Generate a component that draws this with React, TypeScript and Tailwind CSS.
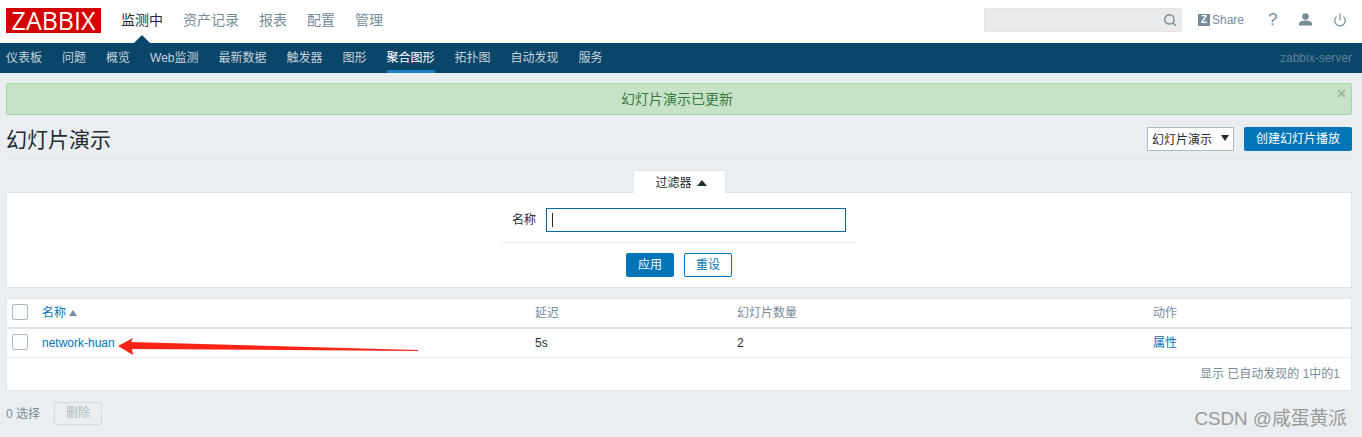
import { Search, Power, X } from "lucide-react";

const FONT = "font-['Liberation_Sans','Noto_Sans_CJK_SC',sans-serif]";

const topMenu = ["资产记录", "报表", "配置", "管理"];
const subMenu = ["仪表板", "问题", "概览", "Web监测", "最新数据", "触发器", "图形", "聚合图形", "拓扑图", "自动发现", "服务"];

function Checkbox() {
  return <span className="block w-4 h-4 -mt-px rounded-[2px] border border-[#acbbc2] bg-white" />;
}

function TopBar() {
  return (
    <header className="h-[43px] bg-white flex items-start pl-[6px] pr-[15px]">
      <div className="mt-[8px] w-[95px] h-[25px] bg-[#d40000] text-white text-[25px] leading-[25px] text-center font-['Open_Sans',sans-serif]">
        ZABBIX
      </div>
      <nav className="flex ml-[20px] mt-[11px] gap-[20px] text-[14px] leading-[18px] text-[#768d99]">
        <span className="relative text-[#1f2c33]">
          监测中
          <span className="absolute left-[13px] top-[24px] w-0 h-0 border-x-[8px] border-x-transparent border-b-[8px] border-b-[#0a466a]" />
        </span>
        {topMenu.map((m) => (
          <span key={m}>{m}</span>
        ))}
      </nav>
      <div className="ml-auto mt-[8px] flex items-start">
        <div className="w-[198px] h-[24px] bg-[#ebebeb] border border-[#e4e4e4] flex items-center justify-end pr-[4px]">
          <Search size={14} strokeWidth={2.5} className="text-[#7a8b94]" />
        </div>
        <div className="ml-[16px] mt-[4px] flex items-center text-[12px] leading-[16px] text-[#768d99]">
          <span className="w-[12px] h-[12px] bg-[#768d99] text-white text-[10px] leading-[12px] font-bold text-center mr-[2px]">Z</span>
          Share
        </div>
        <span className="ml-[24px] mt-[3px] w-[9px] text-[17px] leading-[18px] text-[#768d99]">?</span>
        <svg className="ml-[22px] mt-[5px]" width="13" height="13" viewBox="0 0 13 13" fill="#768d99">
          <circle cx="6.5" cy="3.5" r="3.3" />
          <path d="M0 12.5 V10.5 C0 8.5 3.5 7.5 6.5 7.5 C9.5 7.5 13 8.5 13 10.5 V12.5 Z" />
        </svg>
        <Power size={14} strokeWidth={2} className="ml-[21px] mt-[5px] text-[#768d99]" />
      </div>
    </header>
  );
}

function SubNav() {
  return (
    <nav className="h-[30px] bg-[#0a466a] flex pl-[6px] pr-[10px] text-[12px] leading-[30px] text-[#c5d3db]">
      <div className="flex gap-[20px]">
        {subMenu.map((m) => (
          <span
            key={m}
            className={m === "聚合图形" ? "h-[30px] border-b-[3px] border-[#1d7ec4] text-white" : "h-[30px]"}
          >
            {m}
          </span>
        ))}
      </div>
      <span className="ml-auto text-[#5f8296]">zabbix-server</span>
    </nav>
  );
}

function Message() {
  return (
    <div className="relative mt-[10px] h-[32px] pr-[4px] rounded-[2px] border border-[#a5d6a7] bg-[#c6e2c7] text-center text-[14px] leading-[30px] text-[#3b7a3e]">
      幻灯片演示已更新
      <X size={11} strokeWidth={5} className="absolute right-[4px] top-[4px] text-[#a3b8ac]" />
    </div>
  );
}

function TitleRow() {
  return (
    <div className="mt-[10px] h-[34px] border-b border-[#dfe4e7] flex items-start">
      <h1 className="text-[21px] leading-[29px] text-[#1f2c33]">幻灯片演示</h1>
      <div className="ml-auto mt-[2px] w-[87px] h-[24px] border border-[#acbbc2] bg-white text-[12px] leading-[24px] pl-[4px] text-[#1f2c33] flex items-start">
        幻灯片演示
        <span className="ml-auto mr-[4px] mt-[7px] w-0 h-0 border-x-[4px] border-x-transparent border-t-[6px] border-t-[#1f2c33]" />
      </div>
      <button className="ml-[10px] mt-[2px] w-[108px] h-[24px] rounded-[2px] bg-[#0275b8] text-white text-[12px] leading-[25px]">
        创建幻灯片播放
      </button>
    </div>
  );
}

function Filter() {
  return (
    <section className="mt-[11px]">
      <div className="relative z-10 mx-auto w-[93px] h-[23px] -mb-px bg-white border border-b-0 border-[#e4e8ea] text-center text-[12px] leading-[24px] text-[#1f2c33] pl-[4px]">
        过滤器
        <span className="inline-block ml-[5px] mb-[1px] w-0 h-0 border-x-[5px] border-x-transparent border-b-[6px] border-b-[#1f2c33]" />
      </div>
      <div className="h-[96px] bg-white border border-[#dfe4e7] flex flex-col items-center">
        <div className="w-[354px] h-[50px] border-b border-[#ebeef0] flex items-start">
          <span className="ml-[10px] mt-[18px] text-[12px] leading-[18px] text-[#1f2c33]">名称</span>
          <div className="ml-[10px] mt-[15px] w-[300px] h-[24px] border border-[#0568a6] bg-white flex items-center pl-[5px]">
            <span className="w-px h-[14px] bg-[#1f2c33]" />
          </div>
        </div>
        <div className="mt-[10px] flex gap-[10px]">
          <button className="w-[48px] h-[24px] rounded-[2px] bg-[#0275b8] text-white text-[12px] leading-[24px]">应用</button>
          <button className="w-[48px] h-[24px] rounded-[2px] border border-[#0275b8] bg-white text-[#0275b8] text-[12px] leading-[22px]">重设</button>
        </div>
      </div>
    </section>
  );
}

function SlideTable() {
  return (
    <section className="relative mt-[10px] h-[93px] bg-white border border-[#dfe4e7] text-[12px]">
      <div className="h-[30px] pb-[1px] border-b-[2px] border-[#dfe4e7] flex items-center">
        <div className="w-[35px] pl-[5px]"><Checkbox /></div>
        <div className="w-[493px] text-[#0275b8] flex items-center">
          名称
          <span className="ml-[3px] mt-px w-0 h-0 border-x-[4px] border-x-transparent border-b-[6px] border-b-[#768d99]" />
        </div>
        <div className="w-[202px] text-[#768d99]">延迟</div>
        <div className="w-[416px] text-[#768d99]">幻灯片数量</div>
        <div className="text-[#768d99]">动作</div>
      </div>
      <div className="h-[29px] pb-[1px] border-b border-[#ebeef0] flex items-center text-[#1f2c33]">
        <div className="w-[35px] pl-[5px]"><Checkbox /></div>
        <div className="w-[493px] text-[#0275b8]">network-huan</div>
        <div className="w-[202px]">5s</div>
        <div className="w-[416px]">2</div>
        <div className="text-[#0275b8]">属性</div>
      </div>
      <div className="h-[32px] pr-[11px] text-right leading-[32px] text-[#768d99]">显示 已自动发现的 1中的1</div>
      {/* red arrow drawn on top of the screenshot */}
      <svg className="absolute left-[110px] top-[36px]" width="304" height="26" viewBox="0 0 304 26">
        <path d="M1 11 L16 3 L14 7 L301 15 L301 16 L15 14 L16 20 Z" fill="#fb2416" />
      </svg>
    </section>
  );
}

function Footer() {
  return (
    <div className="mt-[11px] flex items-center text-[12px] text-[#768d99]">
      <span>0 选择</span>
      <button className="ml-[14px] w-[48px] h-[23px] rounded-[2px] border border-[#d5dadd] bg-[#ebeef0] text-[#acbbc2] leading-[21px]">删除</button>
    </div>
  );
}

export default function App() {
  return (
    <div className={`relative h-[437px] overflow-hidden bg-[#ebeef0] ${FONT}`}>
      <TopBar />
      <SubNav />
      <main className="px-[6px] mr-[4px]">
        <Message />
        <TitleRow />
        <Filter />
        <SlideTable />
        <Footer />
      </main>
      <span className="absolute right-[15px] top-[407px] text-[18.8px] leading-[24px] text-[#9a9a9a]">CSDN @咸蛋黄派</span>
    </div>
  );
}
